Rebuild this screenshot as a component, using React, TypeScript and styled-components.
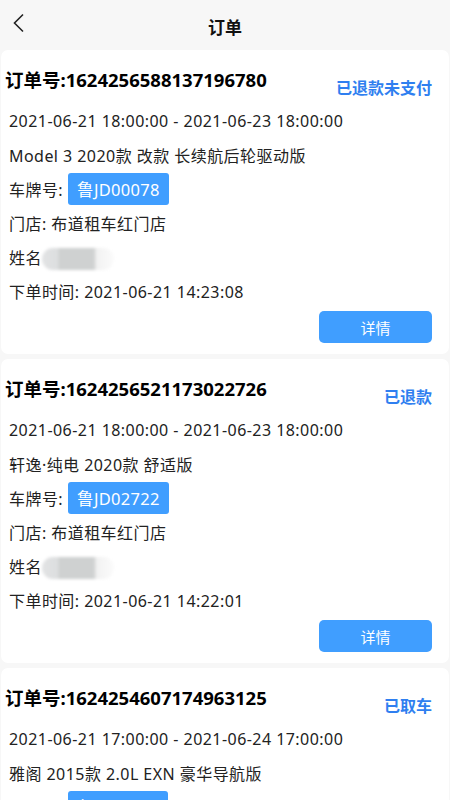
import React from "react";
import styled, { createGlobalStyle } from "styled-components";

const GlobalStyle = createGlobalStyle`
  html, body {
    margin: 0;
    padding: 0;
    background: #f7f7f7;
  }
  body {
    font-family: "Noto Sans", "Noto Sans CJK SC", sans-serif;
    color: #222;
  }
  * { box-sizing: border-box; }
`;

const Page = styled.div`
  width: 450px;
  min-height: 800px;
  background: #f7f7f7;
`;

const Header = styled.header`
  height: 50px;
  display: grid;
  grid-template-columns: 50px 1fr 50px;
  align-items: center;
`;

const BackButton = styled.button`
  border: none;
  background: transparent;
  padding: 0 0 0 12px;
  height: 50px;
  display: flex;
  align-items: center;
  cursor: pointer;
  margin-top: -4px;
`;

const Title = styled.h1`
  margin: 0;
  text-align: center;
  font-size: 17px;
  font-weight: 700;
  color: #111;
  font-family: "Noto Sans CJK SC", sans-serif;
  padding-top: 3px;
`;

const List = styled.main`
  display: flex;
  flex-direction: column;
  gap: 5px;
`;

const Card = styled.section`
  background: #fff;
  border-radius: 7px;
  margin: 0 1px;
  padding: 19px 17px 11px 4px;
  display: flex;
  flex-direction: column;
`;

const HeadRow = styled.div`
  display: flex;
  justify-content: space-between;
  align-items: flex-start;
  height: 22px;
`;

const OrderNo = styled.div`
  font-size: 18.5px;
  font-weight: 700;
  color: #000;
  line-height: 22px;
`;

const Status = styled.div`
  font-size: 16px;
  font-weight: 700;
  color: #2f7ff0;
  line-height: 22px;
  padding-top: 7px;
  font-family: "Noto Sans CJK SC", sans-serif;
`;

const Info = styled.div`
  margin-top: 13px;
  padding-left: 4px;
  display: flex;
  flex-direction: column;
`;

const Line = styled.div`
  height: 34px;
  display: flex;
  align-items: center;
  font-size: 16px;
  letter-spacing: 0.45px;
  color: #222;
  white-space: nowrap;
`;

const Plate = styled.span`
  display: inline-flex;
  align-items: center;
  justify-content: center;
  height: 32px;
  padding: 0 9px;
  margin-left: 5px;
  background: #409eff;
  color: #fff;
  font-size: 16.5px;
  letter-spacing: 0.3px;
  border-radius: 3px;
`;

const Blur = styled.span`
  display: inline-block;
  width: 72px;
  height: 22px;
  margin-left: 0;
  margin-top: 4px;
  border-radius: 11px;
  background: linear-gradient(
    90deg,
    #e2e3e4 0%,
    #dcdedf 22%,
    #cfd1d1 24%,
    #cfd1d1 72%,
    #f2f2f2 76%,
    #fbfbfb 100%
  );
  filter: blur(1.5px);
`;

const Footer = styled.div`
  display: flex;
  justify-content: flex-end;
  margin-top: 3px;
`;

const DetailButton = styled.button`
  width: 113px;
  height: 32px;
  border: none;
  border-radius: 5px;
  background: #409eff;
  color: #fff;
  font-size: 15px;
  font-family: "Noto Sans CJK SC", sans-serif;
  cursor: pointer;
`;

type Order = {
  no: string;
  status: string;
  range: string;
  model: string;
  plate: string;
  store: string;
  time: string;
};

const orders: Order[] = [
  {
    no: "1624256588137196780",
    status: "已退款未支付",
    range: "2021-06-21 18:00:00 - 2021-06-23 18:00:00",
    model: "Model 3 2020款 改款 长续航后轮驱动版",
    plate: "鲁JD00078",
    store: "布道租车红门店",
    time: "2021-06-21 14:23:08",
  },
  {
    no: "1624256521173022726",
    status: "已退款",
    range: "2021-06-21 18:00:00 - 2021-06-23 18:00:00",
    model: "轩逸·纯电 2020款 舒适版",
    plate: "鲁JD02722",
    store: "布道租车红门店",
    time: "2021-06-21 14:22:01",
  },
  {
    no: "1624254607174963125",
    status: "已取车",
    range: "2021-06-21 17:00:00 - 2021-06-24 17:00:00",
    model: "雅阁 2015款 2.0L EXN 豪华导航版",
    plate: "鲁A9W18L",
    store: "布道租车红门店",
    time: "2021-06-21 13:50:07",
  },
];

const BackIcon = () => (
  <svg width="14" height="20" viewBox="0 0 14 20" fill="none">
    <path d="M11 1.5 L2.5 10 L11 18.5" stroke="#222" strokeWidth="1.6" />
  </svg>
);

const OrderCard = ({ o }: { o: Order }) => (
  <Card>
    <HeadRow>
      <OrderNo>订单号:{o.no}</OrderNo>
      <Status>{o.status}</Status>
    </HeadRow>
    <Info>
      <Line>{o.range}</Line>
      <Line>{o.model}</Line>
      <Line>
        车牌号:<Plate>{o.plate}</Plate>
      </Line>
      <Line>门店: {o.store}</Line>
      <Line>
        姓名<Blur />
      </Line>
      <Line>下单时间: {o.time}</Line>
    </Info>
    <Footer>
      <DetailButton>详情</DetailButton>
    </Footer>
  </Card>
);

export default function App() {
  return (
    <Page>
      <GlobalStyle />
      <Header>
        <BackButton aria-label="返回">
          <BackIcon />
        </BackButton>
        <Title>订单</Title>
        <span />
      </Header>
      <List>
        {orders.map((o) => (
          <OrderCard key={o.no} o={o} />
        ))}
      </List>
    </Page>
  );
}
